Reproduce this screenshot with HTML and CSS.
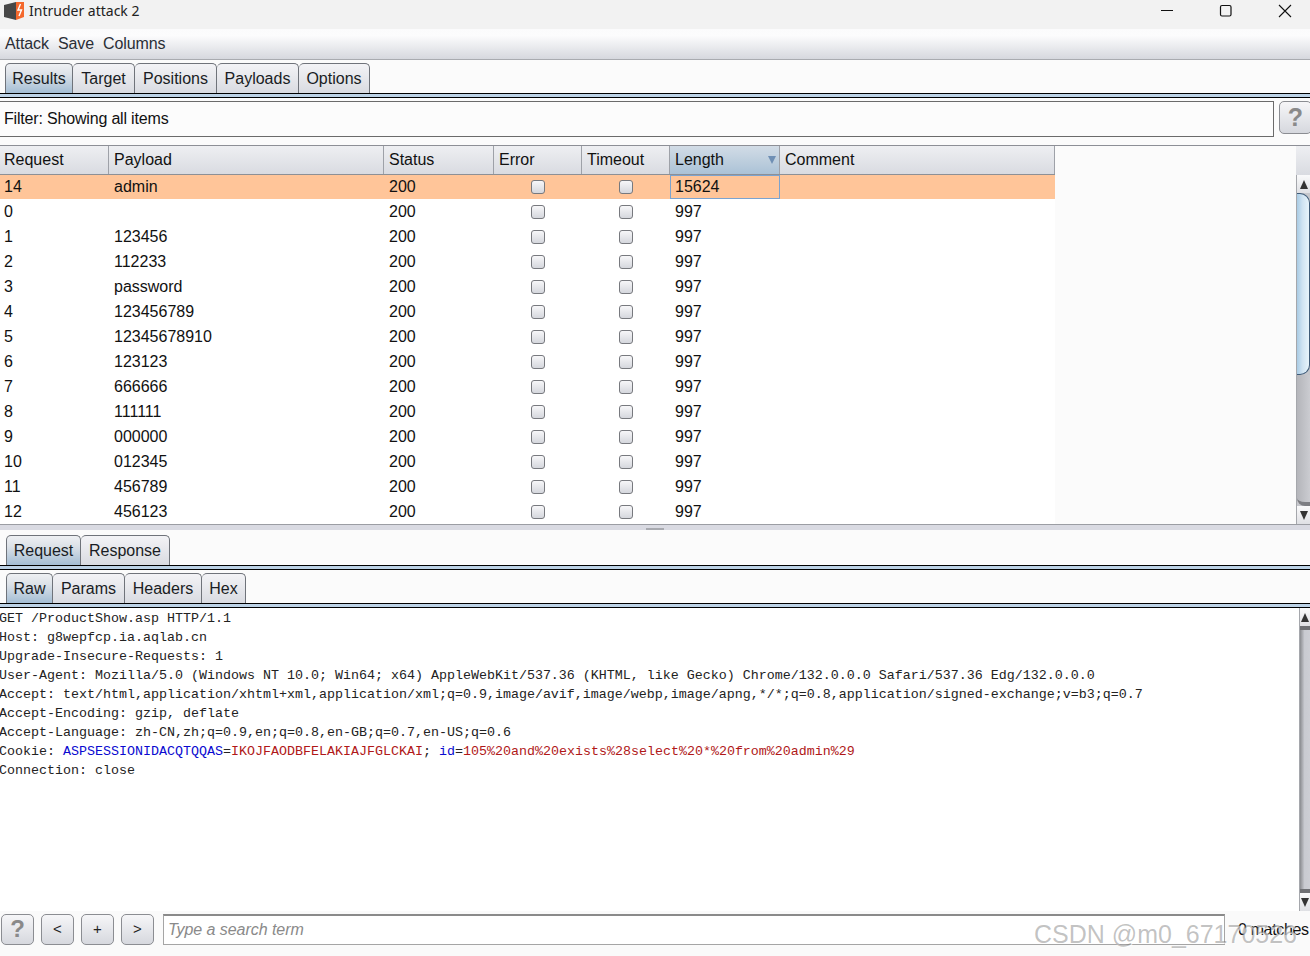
FILE: index.html
```html
<!DOCTYPE html>
<html lang="en">
<head>
<meta charset="utf-8">
<title>Intruder attack 2</title>
<link rel="stylesheet" href="styles.css">
</head>
<body>
<div class="app">
  <header class="titlebar">
    <svg class="logo" width="22" height="20" viewBox="0 0 22 20"><path d="M1 4 13 1v18L1 16z" fill="#474747"/><path d="M13 1h8v15l-8 3z" fill="#f4682c"/><path d="M17.500 3l-2.500 6h3.500l-2.500 6" fill="none" stroke="#fff" stroke-width="1.400"/></svg>
    <span class="title">Intruder attack 2</span>
    <div class="winctl">
      <svg width="14" height="14" viewBox="0 0 14 14"><path d="M1 6.500h12" stroke="#111" stroke-width="1"/></svg>
      <svg width="14" height="14" viewBox="0 0 14 14"><rect x="1.500" y="1.500" width="10.500" height="10.500" rx="1.500" fill="none" stroke="#111" stroke-width="1.200"/></svg>
      <svg width="14" height="14" viewBox="0 0 14 14"><path d="M1 1l12 12M13 1 1 13" stroke="#111" stroke-width="1.100"/></svg>
    </div>
  </header>
  <nav class="menubar"><span>Attack</span><span>Save</span><span>Columns</span></nav>

  <div class="tabrow top">
    <span class="tab on t-results">Results</span><span class="tab t-target">Target</span><span class="tab t-positions">Positions</span><span class="tab t-payloads">Payloads</span><span class="tab t-options">Options</span>
  </div>
  <div class="tabrule"></div>

  <div class="filter">
    <div class="filterbox">Filter: Showing all items</div>
    <div class="btn help big">?</div>
  </div>

  <section class="results">
    <div class="tablewrap">
      <div class="row head">
        <div class="c">Request</div><div class="c">Payload</div><div class="c">Status</div><div class="c">Error</div><div class="c">Timeout</div><div class="c sorted">Length<i class="sort"></i></div><div class="c">Comment</div>
      </div>
      <div class="row hit"><div class="c">14</div><div class="c">admin</div><div class="c">200</div><div class="c ck"><b></b></div><div class="c ck"><b></b></div><div class="c focus">15624</div><div class="c"></div></div>
      <div class="row"><div class="c">0</div><div class="c"></div><div class="c">200</div><div class="c ck"><b></b></div><div class="c ck"><b></b></div><div class="c">997</div><div class="c"></div></div>
      <div class="row"><div class="c">1</div><div class="c">123456</div><div class="c">200</div><div class="c ck"><b></b></div><div class="c ck"><b></b></div><div class="c">997</div><div class="c"></div></div>
      <div class="row"><div class="c">2</div><div class="c">112233</div><div class="c">200</div><div class="c ck"><b></b></div><div class="c ck"><b></b></div><div class="c">997</div><div class="c"></div></div>
      <div class="row"><div class="c">3</div><div class="c">password</div><div class="c">200</div><div class="c ck"><b></b></div><div class="c ck"><b></b></div><div class="c">997</div><div class="c"></div></div>
      <div class="row"><div class="c">4</div><div class="c">123456789</div><div class="c">200</div><div class="c ck"><b></b></div><div class="c ck"><b></b></div><div class="c">997</div><div class="c"></div></div>
      <div class="row"><div class="c">5</div><div class="c">12345678910</div><div class="c">200</div><div class="c ck"><b></b></div><div class="c ck"><b></b></div><div class="c">997</div><div class="c"></div></div>
      <div class="row"><div class="c">6</div><div class="c">123123</div><div class="c">200</div><div class="c ck"><b></b></div><div class="c ck"><b></b></div><div class="c">997</div><div class="c"></div></div>
      <div class="row"><div class="c">7</div><div class="c">666666</div><div class="c">200</div><div class="c ck"><b></b></div><div class="c ck"><b></b></div><div class="c">997</div><div class="c"></div></div>
      <div class="row"><div class="c">8</div><div class="c">111111</div><div class="c">200</div><div class="c ck"><b></b></div><div class="c ck"><b></b></div><div class="c">997</div><div class="c"></div></div>
      <div class="row"><div class="c">9</div><div class="c">000000</div><div class="c">200</div><div class="c ck"><b></b></div><div class="c ck"><b></b></div><div class="c">997</div><div class="c"></div></div>
      <div class="row"><div class="c">10</div><div class="c">012345</div><div class="c">200</div><div class="c ck"><b></b></div><div class="c ck"><b></b></div><div class="c">997</div><div class="c"></div></div>
      <div class="row"><div class="c">11</div><div class="c">456789</div><div class="c">200</div><div class="c ck"><b></b></div><div class="c ck"><b></b></div><div class="c">997</div><div class="c"></div></div>
      <div class="row"><div class="c">12</div><div class="c">456123</div><div class="c">200</div><div class="c ck"><b></b></div><div class="c ck"><b></b></div><div class="c">997</div><div class="c"></div></div>
    </div>
    <div class="sbcol">
      <div class="sbhead"></div>
      <div class="sb">
        <div class="arrow up"></div>
        <div class="thumb"></div>
        <div class="track"></div>
        <div class="arrow down"></div>
      </div>
    </div>
  </section>

  <div class="divider"><span class="grip"></span></div>

  <div class="tabrow sub1"><span class="tab on t-request">Request</span><span class="tab t-response">Response</span></div>
  <div class="tabrule"></div>
  <div class="tabrow sub2"><span class="tab on t-raw">Raw</span><span class="tab t-params">Params</span><span class="tab t-headers">Headers</span><span class="tab t-hex">Hex</span></div>
  <div class="tabrule"></div>

  <section class="message">
<pre class="raw">GET /ProductShow.asp HTTP/1.1
Host: g8wepfcp.ia.aqlab.cn
Upgrade-Insecure-Requests: 1
User-Agent: Mozilla/5.0 (Windows NT 10.0; Win64; x64) AppleWebKit/537.36 (KHTML, like Gecko) Chrome/132.0.0.0 Safari/537.36 Edg/132.0.0.0
Accept: text/html,application/xhtml+xml,application/xml;q=0.9,image/avif,image/webp,image/apng,*/*;q=0.8,application/signed-exchange;v=b3;q=0.7
Accept-Encoding: gzip, deflate
Accept-Language: zh-CN,zh;q=0.9,en;q=0.8,en-GB;q=0.7,en-US;q=0.6
Cookie: <span class="k">ASPSESSIONIDACQTQQAS</span>=<span class="v">IKOJFAODBFELAKIAJFGLCKAI</span>; <span class="k">id</span>=<span class="v">105%20and%20exists%28select%20*%20from%20admin%29</span>
Connection: close</pre>
    <div class="sb msgsb">
      <div class="arrow up"></div>
      <div class="track msgtrack"></div>
      <div class="arrow down"></div>
    </div>
  </section>

  <footer class="searchbar">
    <div class="btn help">?</div>
    <div class="btn">&lt;</div>
    <div class="btn">+</div>
    <div class="btn">&gt;</div>
    <div class="search">Type a search term</div>
    <div class="matches">0 matches</div>
  </footer>
  <div class="watermark">CSDN @m0_67170526</div>
</div>
</body>
</html>
```

FILE: styles.css
```css
* { box-sizing: border-box; }
html, body { margin: 0; padding: 0; height: 100%; overflow: hidden; }
body { background: #fbfbfb; color: #111; font: 16px/20px "Liberation Sans", Arial, sans-serif; }
.app { position: relative; width: 1310px; height: 956px; display: flex; flex-direction: column; overflow: hidden; }

.titlebar { height: 29px; flex: none; background: #f2f2f2; display: flex; align-items: center; padding: 0 18px 7px 3px; }
.logo { margin-right: 4px; }
.title { font: 14px/20px "Noto Sans", "Open Sans", sans-serif; color: #222; }
.winctl { margin-left: auto; display: flex; gap: 45px; }

.menubar { height: 31px; flex: none; display: flex; gap: 9px; padding: 5px 0 0 5px; border-bottom: 1px solid #a9abb0; background: linear-gradient(#fbfbfc 0, #fcfcfd 22%, #d6d8de 100%); color: #2a2e36; letter-spacing: -0.1px; }

.tabrow { flex: none; display: flex; align-items: flex-end; }
.tabrow.top { height: 33px; padding-left: 5px; }
.tabrow.sub1 { height: 35px; padding-left: 6px; }
.tabrow.sub2 { height: 33px; padding-left: 6px; }
.tab { height: 30px; padding: 5px 0 0; text-align: center; border: 1px solid #6f737a; border-bottom: 0; border-left: 0; border-radius: 5px 5px 0 0; background: linear-gradient(#f3f3f6, #d9dbe1); color: #1a1d24; }
.tab.on { border-left: 1px solid #6f737a; background: linear-gradient(#eef0f3 0, #dde2e8 35%, #a3bdd4 100%); }
.t-results { width: 68px; } .t-target { width: 62px; } .t-positions { width: 82px; } .t-payloads { width: 82px; } .t-options { width: 71px; }
.t-request { width: 75px; } .t-response { width: 89px; }
.t-raw { width: 47px; } .t-params { width: 72px; } .t-headers { width: 77px; } .t-hex { width: 44px; }
.tabrule { height: 5px; flex: none; border-top: 1px solid #000; border-bottom: 1px solid #000; background: #bcd2e6; }

.filter { height: 48px; flex: none; display: flex; padding-top: 3px; border-bottom: 1px solid #8d8f96; }
.filterbox { width: 1275px; height: 36px; flex: none; margin-left: -1px; padding: 7px 0 0 4px; border: 1px solid #6b6b6b; background: #fcfcfc; letter-spacing: -0.18px; }
.btn { width: 33px; height: 31px; flex: none; border: 1px solid #8b8d92; border-radius: 5px; background: linear-gradient(#f6f6f8, #d6d8de); text-align: center; font-size: 15px; line-height: 28px; color: #222; }
.help { font-weight: 700; font-size: 24px; color: #8a8a8a; }
.help.big { width: 33px; height: 33px; margin: 0 0 0 5px; line-height: 30px; font-size: 25px; }

.results { height: 379px; flex: none; display: flex; justify-content: space-between; border-bottom: 1px solid #9b9da3; }
.tablewrap { width: 1055px; flex: none; background: #fff; }
.row { display: grid; grid-template-columns: 109px 275px 110px 88px 88px 110px 275px; height: 25px; line-height: 24px; }
.c { padding-left: 5px; white-space: nowrap; color: #111; }
.row .c:first-child { padding-left: 4px; }
.row.head { height: 29px; background: linear-gradient(#eeeff2, #d9dbe1); border-bottom: 1px solid #8d9096; line-height: 27px; }
.head .c { position: relative; border-right: 1px solid #9ea1a8; }
.head .sorted { background: linear-gradient(#d2dce6, #abc2d6); }
.sort { position: absolute; right: 3px; top: 10px; width: 0; height: 0; border-left: 4px solid transparent; border-right: 4px solid transparent; border-top: 8px solid #6f8fb4; }
.row.hit { background: #ffc599 content-box; padding-bottom: 1px; }
.focus { border: 1px solid #7ba3cf; padding-left: 4px; line-height: 22px; }
.ck { display: flex; align-items: center; justify-content: center; padding: 0 0 1px; }
.row.hit .ck { padding: 0; }
.ck b { display: block; width: 14px; height: 14px; border: 1px solid #77797e; border-radius: 3px; background: linear-gradient(#f7f7f9, #d5d7dd); }

.sbcol { width: 14px; flex: none; display: flex; flex-direction: column; }
.sbhead { height: 29px; flex: none; background: linear-gradient(#eeeff2, #d9dbe1); }
.sb { flex: 1; display: flex; flex-direction: column; background: #c6c7cc; border-left: 1px solid #a5a7ac; }
.arrow { height: 18px; flex: none; display: flex; align-items: center; justify-content: center; background: linear-gradient(#fafafb, #dfe0e4); }
.arrow::before { content: ""; width: 0; height: 0; border-left: 4px solid transparent; border-right: 4px solid transparent; }
.up::before { border-bottom: 9px solid #333; }
.down::before { border-top: 9px solid #333; }
.thumb { height: 182px; flex: none; border: 1px solid #3f5b78; border-width: 1px 1px 1px 0; border-radius: 0 10px 10px 0; background: linear-gradient(90deg, #a9cbe4, #cfe3f2 45%, #e8f4fb); }
.track { flex: 1; background: linear-gradient(90deg, #b4b5ba, #cbccd1); border-bottom: 4px solid #7d7e83; border-radius: 0 0 0 8px; }

.divider { height: 5px; flex: none; background: #d9dae2; display: flex; justify-content: center; }
.grip { width: 18px; height: 2px; background: #a8aab0; margin-top: 3px; }

.message { height: 303px; flex: none; display: flex; background: #fff; }
.raw { flex: 1; margin: 0 0 0 -1px; padding-top: 1px; font: 13.330px/19px "Liberation Mono", "Courier New", monospace; color: #222; white-space: pre; overflow: hidden; }
.k { color: #0a0ad0; }
.v { color: #b01818; }
.msgsb { width: 11px; flex: none; }
.msgtrack { background: linear-gradient(90deg, #8b8c90, #c9cad0 45%, #cdced4); border-top: 4px solid #6f7074; border-bottom: 4px solid #6f7074; border-radius: 0; }

.searchbar { flex: 1; display: flex; align-items: flex-start; gap: 7px; padding: 3px 0 0 1px; background: #fafafa; }
.search { width: 1062px; height: 31px; flex: none; margin-left: 2px; padding: 4px 0 0 4px; border: 1px solid #a5a5a5; border-top: 2px solid #8a8a8a; background: #fff; font-style: italic; color: #8a8a8a; letter-spacing: -0.05px; }
.matches { margin-left: 6px; padding-top: 6px; color: #111; white-space: nowrap; letter-spacing: -0.35px; }
.watermark { position: absolute; left: 1034px; top: 919px; font: 25px/30px "Liberation Sans", Arial, sans-serif; color: rgba(120,120,120,.45); white-space: nowrap; pointer-events: none; text-shadow: 1px 1px 0 rgba(255,255,255,.7); }
```
